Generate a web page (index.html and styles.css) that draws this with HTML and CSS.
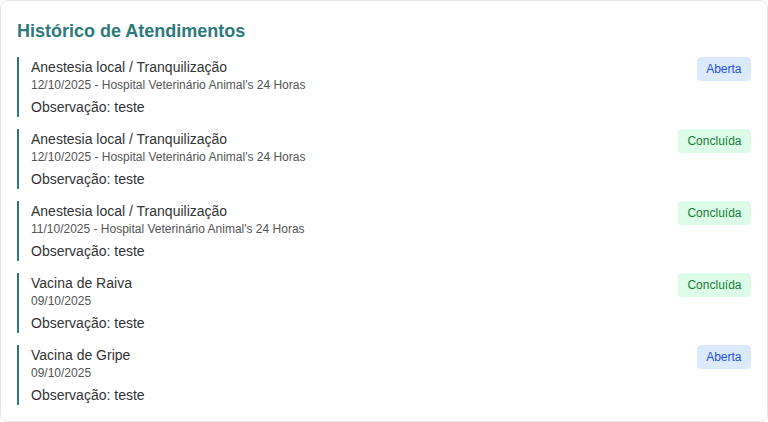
FILE: index.html
```html
<!DOCTYPE html>
<html lang="pt-BR">
<head>
<meta charset="utf-8">
<title>Histórico de Atendimentos</title>
<link rel="stylesheet" href="styles.css">
</head>
<body>
<section class="card">
  <h2 class="card-title">Histórico de Atendimentos</h2>
  <ul class="list">
    <li class="item">
      <div class="info">
        <div class="name">Anestesia local / Tranquilização</div>
        <div class="meta">12/10/2025 - Hospital Veterinário Animal's 24 Horas</div>
        <div class="obs">Observação: teste</div>
      </div>
      <span class="badge badge-open">Aberta</span>
    </li>
    <li class="item">
      <div class="info">
        <div class="name">Anestesia local / Tranquilização</div>
        <div class="meta">12/10/2025 - Hospital Veterinário Animal's 24 Horas</div>
        <div class="obs">Observação: teste</div>
      </div>
      <span class="badge badge-done">Concluída</span>
    </li>
    <li class="item">
      <div class="info">
        <div class="name">Anestesia local / Tranquilização</div>
        <div class="meta">11/10/2025 - Hospital Veterinário Animal's 24 Horas</div>
        <div class="obs">Observação: teste</div>
      </div>
      <span class="badge badge-done">Concluída</span>
    </li>
    <li class="item">
      <div class="info">
        <div class="name">Vacina de Raiva</div>
        <div class="meta">09/10/2025</div>
        <div class="obs">Observação: teste</div>
      </div>
      <span class="badge badge-done">Concluída</span>
    </li>
    <li class="item">
      <div class="info">
        <div class="name">Vacina de Gripe</div>
        <div class="meta">09/10/2025</div>
        <div class="obs">Observação: teste</div>
      </div>
      <span class="badge badge-open">Aberta</span>
    </li>
  </ul>
</section>
</body>
</html>
```

FILE: styles.css
```css
* { box-sizing: border-box; }
html, body {
  margin: 0;
  padding: 0;
  background: #ffffff;
  font-family: "Liberation Sans", Arial, sans-serif;
}
.card {
  width: 768px;
  height: 422px;
  border: 1px solid #e5e7eb;
  border-radius: 8px;
  padding: 16px;
  background: #ffffff;
}
.card-title {
  margin: 0 0 12px 0;
  font-size: 18px;
  line-height: 28px;
  font-weight: 700;
  color: #2c7a7b;
}
.list {
  list-style: none;
  margin: 0;
  padding: 0;
  display: flex;
  flex-direction: column;
  gap: 12px;
}
.item {
  display: flex;
  justify-content: space-between;
  align-items: flex-start;
  border-left: 2px solid #2c7a7b;
  padding-left: 12px;
}
.name {
  font-size: 14px;
  line-height: 20px;
  color: #333333;
}
.meta {
  font-size: 12px;
  line-height: 16px;
  color: #555555;
}
.obs {
  margin-top: 4px;
  font-size: 14px;
  line-height: 20px;
  color: #333333;
}
.badge {
  display: inline-block;
  font-size: 12px;
  line-height: 16px;
  padding: 4px 9.5px;
  border-radius: 4px;
}
.badge-open {
  background: #dbeafe;
  color: #2352d8;
}
.badge-done {
  background: #dcfce7;
  color: #15803d;
}
```
